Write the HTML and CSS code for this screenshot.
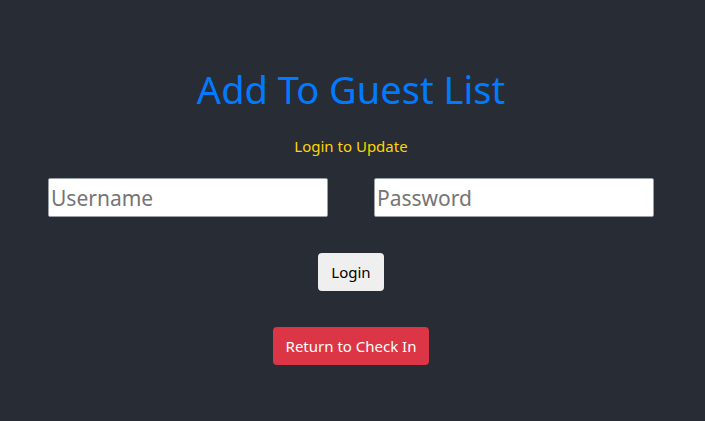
FILE: index.html
```html
<!DOCTYPE html>
<html>
<head>
<meta charset="utf-8">
<link rel="stylesheet" href="styles.css">
</head>
<body>
<main class="page">
  <h1 class="title">Add To Guest List</h1>
  <p class="subtitle">Login to Update</p>
  <form class="login-form">
    <div class="fields">
      <input class="field" type="text" placeholder="Username" autofocus>
      <input class="field" type="password" placeholder="Password">
    </div>
    <button class="btn btn-light" type="button">Login</button>
  </form>
  <button class="btn btn-danger" type="button">Return to Check In</button>
</main>
</body>
</html>
```
FILE: styles.css
```css
html, body {
  margin: 0;
  padding: 0;
  background: #282c34;
  height: 100%;
}
body {
  font-family: "Noto Sans", "Open Sans", sans-serif;
}
.page {
  display: flex;
  flex-direction: column;
  align-items: center;
  padding-top: 65px;
  padding-right: 3px;
}
.title {
  margin: 0;
  font-size: 38px;
  font-weight: 400;
  line-height: 48px;
  color: #007bff;
}
.subtitle {
  margin: 23px 0 0;
  font-size: 15px;
  line-height: 20px;
  color: #ffd500;
}
.login-form {
  display: flex;
  flex-direction: column;
  align-items: center;
  margin-top: 22px;
}
.fields {
  display: flex;
  gap: 46px;
}
.field {
  box-sizing: border-box;
  width: 280px;
  height: 39px;
  margin: 0;
  padding: 0 2px;
  border: 1px solid #9aa0a8;
  border-radius: 2px;
  background: #fff;
  font-family: inherit;
  font-size: 21px;
  color: #222;
  outline: none;
}
.field::placeholder {
  color: #757575;
}
.btn {
  box-sizing: border-box;
  height: 38px;
  padding: 0 12px;
  border: 1px solid transparent;
  border-radius: 4px;
  font-family: inherit;
  font-size: 15px;
  line-height: 36px;
}
.btn-light {
  margin-top: 36px;
  background: #efefef;
  color: #000;
}
.btn-danger {
  margin-top: 36px;
  background: #dc3545;
  color: #fff;
}
```
